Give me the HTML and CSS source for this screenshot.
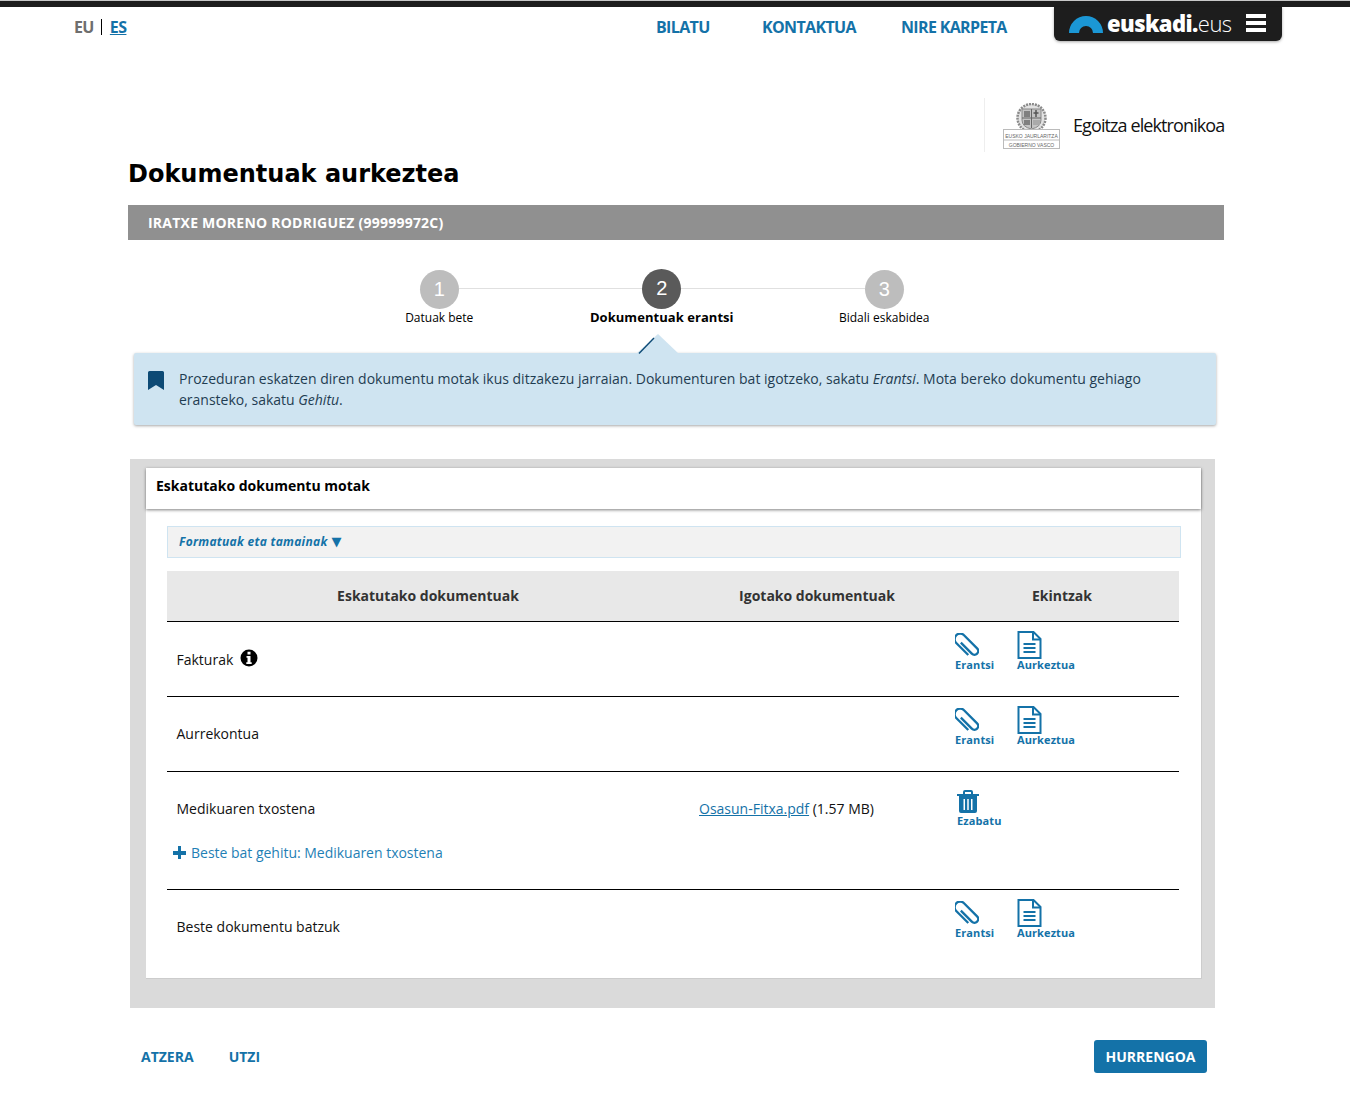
FILE: index.html
```html
<!DOCTYPE html>
<html lang="eu">
<head>
<meta charset="utf-8">
<title>Dokumentuak aurkeztea</title>
<link rel="stylesheet" href="styles.css">
</head>
<body>
<svg class="defs" width="0" height="0" aria-hidden="true">
  <symbol id="clip" viewBox="0 0 24 25">
    <path d="M4 9V24.500a3.750 3.750 0 0 0 7.500 0V6a5.500 5.500 0 0 0-11 0V23" transform="translate(11.500 12.500) rotate(-45) scale(1) translate(-6 -15)" fill="none" stroke="currentColor" stroke-width="2.300"/>
  </symbol>
  <symbol id="doc" viewBox="0 0 24 28">
    <path d="M1 1h15l7 7v19H1z" fill="none" stroke="currentColor" stroke-width="2"/>
    <path d="M15.500 1v7.500H23" fill="none" stroke="currentColor" stroke-width="2"/>
    <path d="M6 13h12M6 17h12M6 21h12" fill="none" stroke="currentColor" stroke-width="2"/>
  </symbol>
  <symbol id="trash" viewBox="0 0 22 24">
    <path d="M0 5h22v2H0zM6 5V3a2 2 0 0 1 2-2h6a2 2 0 0 1 2 2v2h-2V3H8v2z" fill="currentColor"/>
    <path fill-rule="evenodd" d="M2 7h18v15a2 2 0 0 1-2 2H4a2 2 0 0 1-2-2zM6.500 10v11h1.500V10zM10.250 10v11h1.500V10zM14 10v11h1.500V10z" fill="currentColor"/>
  </symbol>
</svg>

<div class="topbar"></div>
<header class="header">
  <div class="lang"><span class="lang-current">EU</span><a class="lang-link" href="#">ES</a></div>
  <nav class="nav">
    <a href="#" class="nav-a">BILATU</a>
    <a href="#" class="nav-b">KONTAKTUA</a>
    <a href="#" class="nav-c">NIRE KARPETA</a>
  </nav>
  <div class="brandbox">
    <svg class="arc" viewBox="0 0 34 17" width="34" height="17"><path d="M0 17a17 17 0 0 1 34 0H24a7 7 0 0 0-14 0z" fill="#1b97d5"/></svg>
    <span class="brandname"><b>euskadi.</b>eus</span>
    <span class="burger"><i></i><i></i><i></i></span>
  </div>
</header>

<main class="page">
  <div class="org">
    <div class="org-inner">
      <svg class="crest" viewBox="0 0 57 46" width="57" height="46">
        <circle cx="28.500" cy="15" r="14" fill="#e2e2e2" stroke="#8a8a8a" stroke-width="2.500" stroke-dasharray="2 1"/>
        <path d="M19 6h19v11q0 7-9.500 9Q19 24 19 17z" fill="#c4c4c4" stroke="#888"/>
        <path d="M28.500 6v19M19 15h19" stroke="#666"/>
        <path d="M21 8h6v6h-6zM21 17h6v5h-6z" fill="#808080"/>
        <path d="M33 7v7M30.500 10h5" stroke="#555" stroke-width="1.500"/>
        <path d="M30 17h7v5h-7z" fill="#aaa"/>
        <rect x=".5" y="26.500" width="56" height="19" fill="#fff" stroke="#bbb"/>
        <path d="M1 37h56" stroke="#bbb"/>
        <text x="28.500" y="34.500" class="crest-t">EUSKO JAURLARITZA</text>
        <text x="28.500" y="43.500" class="crest-t">GOBIERNO VASCO</text>
      </svg>
      <span class="org-name">Egoitza elektronikoa</span>
    </div>
  </div>

  <h1 class="title">Dokumentuak aurkeztea</h1>
  <div class="userbar">IRATXE MORENO RODRIGUEZ (99999972C)</div>

  <ol class="steps">
    <li class="step"><span class="num">1</span><span class="lbl">Datuak bete</span></li>
    <li class="step current"><span class="num">2</span><span class="lbl">Dokumentuak erantsi</span></li>
    <li class="step"><span class="num">3</span><span class="lbl">Bidali eskabidea</span></li>
  </ol>

  <div class="alert">
    <svg class="pointer" viewBox="0 0 44 20" width="44" height="20"><path d="M0 20 22 0l21 20z" fill="#cfe4f1"/><path d="M3 19.500 18 4" stroke="#0d4a75" stroke-width="1.400"/></svg>
    <svg class="mark" viewBox="0 0 16 20" width="16" height="20"><path d="M0 1.500A1.500 1.500 0 0 1 1.500 0h13A1.500 1.500 0 0 1 16 1.500V19l-8-5-8 5z" fill="#0d4a75"/></svg>
    <p class="alert-text">Prozeduran eskatzen diren dokumentu motak ikus ditzakezu jarraian. Dokumenturen bat igotzeko, sakatu <em>Erantsi</em>. Mota bereko dokumentu gehiago eransteko, sakatu <em>Gehitu</em>.</p>
  </div>

  <section class="panel">
    <div class="card">
      <h2 class="card-head">Eskatutako dokumentu motak</h2>
      <div class="card-body">
        <div class="formats"><a href="#" class="formats-link">Formatuak eta tamainak</a><span class="formats-arrow">▼</span></div>
        <table class="docs">
          <colgroup><col class="c1"><col class="c2"><col class="c3"></colgroup>
          <thead>
            <tr><th>Eskatutako dokumentuak</th><th>Igotako dokumentuak</th><th>Ekintzak</th></tr>
          </thead>
          <tbody>
            <tr class="row">
              <td class="name">Fakturak <svg class="info" viewBox="0 0 18 18" width="18" height="18"><circle cx="9" cy="9" r="8.500" fill="#000"/><path d="M7.500 2.800h3v2.800h-3zM6.500 7h4v6.200h1.200v1.800H6.300v-1.800h1.200V8.800h-1z" fill="#fff"/></svg></td>
              <td></td>
              <td class="acts">
                <div class="actions">
                  <a href="#" class="act act-first"><svg class="ic-clip"><use href="#clip"/></svg><span>Erantsi</span></a>
                  <a href="#" class="act"><svg class="ic-doc"><use href="#doc"/></svg><span>Aurkeztua</span></a>
                </div>
              </td>
            </tr>
            <tr class="row">
              <td class="name">Aurrekontua</td>
              <td></td>
              <td class="acts">
                <div class="actions">
                  <a href="#" class="act act-first"><svg class="ic-clip"><use href="#clip"/></svg><span>Erantsi</span></a>
                  <a href="#" class="act"><svg class="ic-doc"><use href="#doc"/></svg><span>Aurkeztua</span></a>
                </div>
              </td>
            </tr>
            <tr class="row row-open">
              <td class="name">Medikuaren txostena</td>
              <td class="file"><a href="#">Osasun-Fitxa.pdf</a> (1.57 MB)</td>
              <td class="acts acts-del">
                <div class="actions">
                  <a href="#" class="act act-del"><svg class="ic-trash"><use href="#trash"/></svg><span>Ezabatu</span></a>
                </div>
              </td>
            </tr>
            <tr class="row-add">
              <td colspan="3"><a href="#" class="add"><span class="plus"></span>Beste bat gehitu: Medikuaren txostena</a></td>
            </tr>
            <tr class="row row-last">
              <td class="name">Beste dokumentu batzuk</td>
              <td></td>
              <td class="acts">
                <div class="actions">
                  <a href="#" class="act act-first"><svg class="ic-clip"><use href="#clip"/></svg><span>Erantsi</span></a>
                  <a href="#" class="act"><svg class="ic-doc"><use href="#doc"/></svg><span>Aurkeztua</span></a>
                </div>
              </td>
            </tr>
          </tbody>
        </table>
      </div>
    </div>
  </section>

  <footer class="foot">
    <a href="#" class="foot-link">ATZERA</a>
    <a href="#" class="foot-link">UTZI</a>
    <a href="#" class="next">HURRENGOA</a>
  </footer>
</main>
</body>
</html>
```
FILE: styles.css
```css
* { box-sizing: border-box; }
html, body { margin: 0; padding: 0; }
body { font-family: "Open Sans", "Liberation Sans", sans-serif; color: #000; background: #fff; font-size: 14px; height: 1108px; overflow: hidden; }
a { color: #1472a8; }
.defs { position: absolute; }

.topbar { height: 7px; background: #1d1d1d; border-top: 1px solid #c8c8c8; }
.header { display: flex; align-items: flex-start; height: 58px; padding-left: 74px; }
.lang { display: flex; align-items: center; width: 582px; margin-top: 12px; font-size: 16px; font-weight: 700; line-height: 16px; letter-spacing: -.6px; }
.lang-current { color: #6e6e6e; padding-right: 7px; border-right: 1px solid #000; }
.lang-link { margin-left: 8px; }
.nav { display: flex; width: 398px; margin-top: 9px; font-size: 16px; font-weight: 700; line-height: 22px; letter-spacing: -.65px; }
.nav a { text-decoration: none; }
.nav-a { width: 106px; }
.nav-b { width: 139px; }
.brandbox { display: flex; align-items: center; width: 228px; height: 34px; padding: 0 0 2px 15px; background: #1d1d1d; border-radius: 0 0 6px 6px; box-shadow: 0 1px 3px rgba(0,0,0,.35); color: #fff; }
.arc { flex: none; margin-top: 3px; }
.brandname { margin-left: 4px; margin-top: -1px; font-size: 22px; line-height: 26px; font-weight: 300; letter-spacing: -.5px; width: 139px; }
.brandname b { font-weight: 800; letter-spacing: -.6px; }
.burger { display: flex; flex-direction: column; gap: 3px; width: 20px; }
.burger i { display: block; height: 4px; background: #fff; }

.page { width: 1096px; margin-left: 128px; }
.org { display: flex; justify-content: flex-end; padding-top: 33px; }
.org-inner { display: flex; align-items: center; width: 240px; height: 54px; padding-left: 18px; border-left: 1px solid #eee; }
.crest { flex: none; margin-top: 1px; }
.crest-t { font-family: "Liberation Sans", sans-serif; font-size: 5px; fill: #666; text-anchor: middle; }
.org-name { margin-left: 13px; font-size: 18px; line-height: 26px; font-weight: 400; letter-spacing: -.9px; color: #111; white-space: nowrap; }

.title { margin: 5px 0 0; font-family: "DejaVu Sans", sans-serif; font-size: 24px; font-weight: 700; line-height: 35px; }
.userbar { height: 35px; margin-top: 13px; padding-left: 20px; background: #909090; color: #fff; font-size: 14px; font-weight: 700; line-height: 35px; letter-spacing: .23px; }

.steps { position: relative; display: flex; list-style: none; margin: 30px 0 0; padding: 0 0 0 200px; }
.steps::before { content: ""; position: absolute; left: 311px; top: 18px; width: 445px; height: 1px; background: #e0e0e0; }
.step { position: relative; display: flex; flex-direction: column; align-items: center; width: 222.500px; }
.num { display: block; width: 39px; height: 39px; border-radius: 50%; background: #bdbdbd; color: #fff; font-family: "Liberation Sans", sans-serif; font-size: 20px; line-height: 39px; text-align: center; }
.current .num { height: 40px; margin-top: -1px; background: #5a5a5a; line-height: 38px; }
.lbl { margin-top: -1px; font-size: 12px; line-height: 20px; white-space: nowrap; }
.current .lbl { font-weight: 700; font-size: 13px; line-height: 18px; letter-spacing: .05px; }

.alert { position: relative; display: flex; width: 1082px; height: 72px; margin: 25px 0 0 6px; padding: 15px 30px 0 14px; background: #cfe4f1; border-radius: 2px; box-shadow: 0 1px 3px rgba(0,0,0,.35); }
.pointer { position: absolute; left: 502px; top: -19px; }
.mark { flex: none; margin-top: 3px; }
.alert-text { margin: 0 0 0 15px; font-size: 14px; line-height: 21px; color: #1f3d52; }

.panel { width: 1085px; height: 549px; margin: 34px 0 0 2px; padding: 9px 13px 0 16px; background: #dadada; }
.card { height: 511px; background: #fff; border-right: 1px solid #ccc; border-bottom: 1px solid #ccc; }
.card-head { height: 41px; margin: 0; padding-left: 10px; background: #fff; box-shadow: 0 1px 3px rgba(0,0,0,.5); font-size: 14px; font-weight: 700; line-height: 36px; }
.card-body { padding: 17px 21px 0; }
.formats { display: flex; align-items: center; width: 1014px; height: 32px; padding-left: 11px; background: #f2f2f2; border: 1px solid #cfe4f1; }
.formats-link { font-size: 12px; font-weight: 700; font-style: italic; letter-spacing: .28px; line-height: 28px; text-decoration: none; color: #1472a8; }
.formats-arrow { margin-left: 4px; font-family: "DejaVu Sans", sans-serif; font-size: 13px; line-height: 28px; color: #1472a8; }

.docs { width: 1012px; margin-top: 13px; border-collapse: collapse; table-layout: fixed; }
.c1 { width: 522px; }
.c2 { width: 256px; }
.c3 { width: 234px; }
.docs th { height: 50px; padding: 0; background: #e8e8e8; border-bottom: 1px solid #000; font-size: 14px; font-weight: 700; color: #333; text-align: center; }
.row td { height: 75px; padding: 0 10px; border-bottom: 1px solid #000; vertical-align: middle; font-size: 14px; }
.row .name { padding-left: 9.500px; color: #111; }
.row-open td { border-bottom: 0; height: 75px; }
.row-last td { border-bottom: 0; }
.info { margin-left: 3px; vertical-align: -2px; }
.file { color: #111; }
.row .acts { vertical-align: top; padding-top: 10px; }
.row .acts-del { padding-top: 17px; }
.actions { display: flex; }
.act { display: flex; flex-direction: column; font-size: 11px; font-weight: 700; line-height: 13px; text-decoration: none; color: #1472a8; letter-spacing: .1px; }
.act-first { width: 62px; }
.act-del { margin-left: 2px; }
.ic-clip { display: block; width: 24px; height: 25px; margin-top: 1px; }
.ic-doc { display: block; width: 25px; height: 28px; margin-top: -1px; margin-bottom: -1px; }
.ic-trash { display: block; width: 22px; height: 24px; margin-bottom: 1px; }
.row-add td { height: 43px; padding: 0 0 0 6px; border-bottom: 1px solid #000; vertical-align: top; font-size: 14px; line-height: 12px; }
.add { display: flex; align-items: center; text-decoration: none; color: #1f7fb5; letter-spacing: -.015px; }
.plus { position: relative; display: block; width: 13px; height: 13px; margin-right: 5px; }
.plus::before { content: ""; position: absolute; left: 0; right: 0; top: 5px; height: 3.500px; background: #1472a8; }
.plus::after { content: ""; position: absolute; top: 0; bottom: 0; left: 4.750px; width: 3.500px; background: #1472a8; }

.foot { display: flex; align-items: center; height: 33px; margin-top: 32px; padding-left: 13px; }
.foot-link { margin-right: 35px; font-size: 14px; font-weight: 700; text-decoration: none; }
.next { margin-left: auto; margin-right: 17px; width: 113px; height: 33px; background: #1472a8; border-radius: 3px; color: #fff; font-size: 14px; font-weight: 700; line-height: 33px; text-align: center; text-decoration: none; }
```
